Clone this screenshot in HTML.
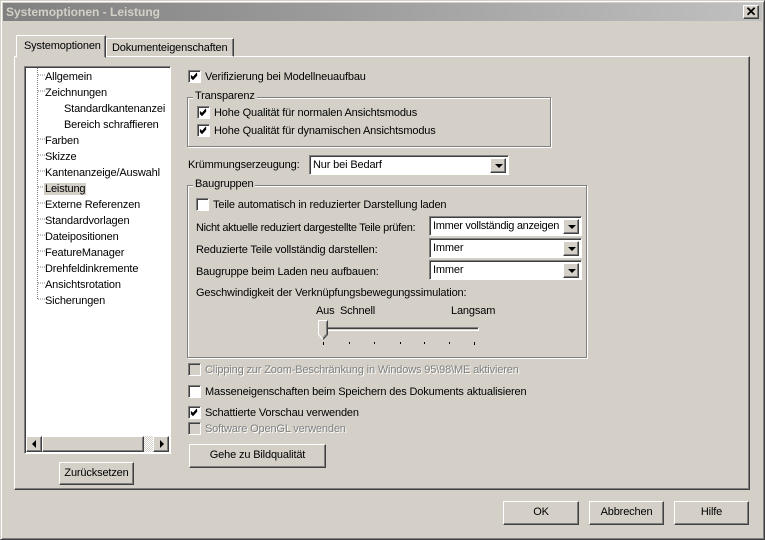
<!DOCTYPE html>
<html><head><meta charset="utf-8"><style>
*{box-sizing:border-box;margin:0;padding:0}
body{width:765px;height:540px;background:#d4d0c8;font-family:"Liberation Sans",sans-serif;font-size:11px;letter-spacing:-0.15px;color:#000;position:relative;overflow:hidden}
.a{position:absolute;white-space:nowrap}
.win{left:0;top:0;width:765px;height:540px;border:1px solid;border-color:#d4d0c8 #404040 #404040 #d4d0c8;box-shadow:inset 1px 1px #fff,inset -1px -1px #808080}
.title{left:3px;top:3px;width:759px;height:18px;background:linear-gradient(90deg,#808080,#c0c0c0);color:#d4d0c8;font-weight:bold;font-size:12px;letter-spacing:0;line-height:18px;padding-left:3px}
.rz{border:1px solid;border-color:#fff #404040 #404040 #fff;box-shadow:inset -1px -1px #808080;background:#d4d0c8}
.sk{border:1px solid;border-color:#808080 #fff #fff #808080;box-shadow:inset 1px 1px #404040;background:#fff}
.grp{border:1px solid #808080;box-shadow:1px 1px #fff,inset 1px 1px #fff}
.gl{background:#d4d0c8;padding:0 2px}
.cb{width:13px;height:13px}
.cb svg{position:absolute;left:1px;top:1px}
.dis{color:#808080;text-shadow:1px 1px #fff}
.cbd{background:#d4d0c8}
.btn{text-align:center;line-height:21px}
.dd{position:absolute;right:2px;top:2px;width:16px;height:15px}
.dd:after{content:"";position:absolute;left:4px;top:5px;border-left:4px solid transparent;border-right:4px solid transparent;border-top:4px solid #000}
.tree{font-size:11px}
.t{top:1px}
</style></head><body>
<div class="a win"></div>
<div class="a title">Systemoptionen - Leistung</div>
<div class="a rz" style="left:743px;top:5px;width:16px;height:14px;text-align:center;line-height:11px;font-size:13px;font-weight:bold">✕</div>

<div class="a rz" style="left:14px;top:56px;width:736px;height:434px;box-shadow:inset -1px -1px #808080"></div>
<div class="a" style="left:106px;top:38px;width:128px;height:19px;border:1px solid;border-color:#fff #404040 transparent #fff;box-shadow:inset -1px 0 #808080;padding:3px 0 0 5px">Dokumenteigenschaften</div>
<div class="a" style="left:16px;top:35px;width:90px;height:23px;border:1px solid;border-color:#fff #404040 transparent #fff;box-shadow:inset -1px 0 #808080;background:#d4d0c8;padding:4px 0 0 7px">Systemoptionen</div>

<div class="a sk" style="left:24px;top:66px;width:147px;height:388px"></div>
<svg class="a" style="left:26px;top:68px" width="30" height="240">
<g stroke="#808080" stroke-dasharray="1 1" fill="none">
<path d="M11.5 0V232M12 7h7M12 23h7M12 71h7M12 87h7M12 103h7M12 119h7M12 135h7M12 151h7M12 167h7M12 183h7M12 199h7M12 215h7M12 231h7M30.5 28V56M31 39h7M31 55h7"/>
</g></svg>
<div class="a tree" style="left:45px;top:69px;line-height:16px">Allgemein<br>Zeichnungen<br><span style="margin-left:19px">Standardkantenanzei</span><br><span style="margin-left:19px">Bereich schraffieren</span><br>Farben<br>Skizze<br>Kantenanzeige/Auswahl<br><span style="background:#d4d0c8;padding:0 1px;margin-left:-1px">Leistung</span><br>Externe Referenzen<br>Standardvorlagen<br>Dateipositionen<br>FeatureManager<br>Drehfeldinkremente<br>Ansichtsrotation<br>Sicherungen</div>
<div class="a" style="left:26px;top:436px;width:143px;height:16px;background:repeating-conic-gradient(#d4d0c8 0 25%,#fff 0 50%) 0 0/2px 2px"></div>
<div class="a rz" style="left:26px;top:436px;width:16px;height:16px"><div class="a" style="left:5px;top:3px;border-top:4px solid transparent;border-bottom:4px solid transparent;border-right:4px solid #000"></div></div>
<div class="a rz" style="left:42px;top:436px;width:102px;height:16px"></div>
<div class="a rz" style="left:153px;top:436px;width:16px;height:16px"><div class="a" style="left:6px;top:3px;border-top:4px solid transparent;border-bottom:4px solid transparent;border-left:4px solid #000"></div></div>
<div class="a rz btn" style="left:59px;top:462px;width:75px;height:23px">Zurücksetzen</div>

<div class="a sk cb" style="left:188px;top:70px"><svg width="9" height="9"><path d="M1 3.5l2 2 4-4.5M1 4.5l2 2 4-4.5M1 5.5l2 2 4-4.5" stroke="#000" fill="none"/></svg></div>
<div class="a" style="left:205px;top:71px">Verifizierung bei Modellneuaufbau</div>

<div class="a grp" style="left:187px;top:97px;width:364px;height:50px"></div>
<div class="a gl" style="left:193px;top:90px">Transparenz</div>
<div class="a sk cb" style="left:197px;top:106px"><svg width="9" height="9"><path d="M1 3.5l2 2 4-4.5M1 4.5l2 2 4-4.5M1 5.5l2 2 4-4.5" stroke="#000" fill="none"/></svg></div>
<div class="a" style="left:214px;top:107px">Hohe Qualität für normalen Ansichtsmodus</div>
<div class="a sk cb" style="left:197px;top:124px"><svg width="9" height="9"><path d="M1 3.5l2 2 4-4.5M1 4.5l2 2 4-4.5M1 5.5l2 2 4-4.5" stroke="#000" fill="none"/></svg></div>
<div class="a" style="left:214px;top:125px">Hohe Qualität für dynamischen Ansichtsmodus</div>

<div class="a" style="left:188px;top:159px">Krümmungserzeugung:</div>
<div class="a sk" style="left:309px;top:155px;width:200px;height:20px;padding:3px 3px">Nur bei Bedarf<div class="dd rz"></div></div>

<div class="a grp" style="left:187px;top:185px;width:400px;height:173px"></div>
<div class="a gl" style="left:193px;top:178px">Baugruppen</div>
<div class="a sk cb" style="left:196px;top:198px"></div>
<div class="a" style="left:213px;top:199px">Teile automatisch in reduzierter Darstellung laden</div>
<div class="a" style="left:196px;top:222px;letter-spacing:-0.3px">Nicht aktuelle reduziert dargestellte Teile prüfen:</div>
<div class="a sk" style="left:429px;top:216px;width:153px;height:20px;padding:3px 3px;overflow:hidden;letter-spacing:-0.3px">Immer vollständig anzeigen<div class="dd rz"></div></div>
<div class="a" style="left:196px;top:244px">Reduzierte Teile vollständig darstellen:</div>
<div class="a sk" style="left:429px;top:238px;width:153px;height:20px;padding:3px 3px">Immer<div class="dd rz"></div></div>
<div class="a" style="left:196px;top:266px">Baugruppe beim Laden neu aufbauen:</div>
<div class="a sk" style="left:429px;top:260px;width:153px;height:20px;padding:3px 3px">Immer<div class="dd rz"></div></div>
<div class="a" style="left:196px;top:287px">Geschwindigkeit der Verknüpfungsbewegungssimulation:</div>
<div class="a" style="left:316px;top:305px">Aus</div>
<div class="a" style="left:340px;top:305px">Schnell</div>
<div class="a" style="left:451px;top:305px">Langsam</div>
<div class="a" style="left:322px;top:327px;width:157px;height:4px;border:1px solid;border-color:#808080 #fff #fff #808080;box-shadow:inset 1px 1px #404040"></div>
<svg class="a" style="left:317px;top:320px" width="170" height="28">
<path d="M1.5 0.5h9v14l-4.5 5l-4.5-5z" fill="#d4d0c8" stroke="#fff"/>
<path d="M10.5 0.5v14l-4.5 5" fill="none" stroke="#404040"/>
<path d="M9.5 1.5v12.5l-3.5 4" fill="none" stroke="#808080"/>
<g stroke="#000"><path d="M6.5 22v3M32.5 22v2M57.5 22v2M83.5 22v2M107.5 22v2M132.5 22v2M157.5 22v3"/></g>
</svg>

<div class="a sk cb cbd" style="left:188px;top:363px"></div>
<div class="a dis" style="left:205px;top:364px">Clipping zur Zoom-Beschränkung in Windows 95\98\ME aktivieren</div>
<div class="a sk cb" style="left:188px;top:385px"></div>
<div class="a" style="left:205px;top:386px">Masseneigenschaften beim Speichern des Dokuments aktualisieren</div>
<div class="a sk cb" style="left:188px;top:406px"><svg width="9" height="9"><path d="M1 3.5l2 2 4-4.5M1 4.5l2 2 4-4.5M1 5.5l2 2 4-4.5" stroke="#000" fill="none"/></svg></div>
<div class="a" style="left:205px;top:407px">Schattierte Vorschau verwenden</div>
<div class="a sk cb cbd" style="left:188px;top:422px"></div>
<div class="a dis" style="left:205px;top:423px">Software OpenGL verwenden</div>
<div class="a rz btn" style="left:189px;top:444px;width:137px;height:24px">Gehe zu Bildqualität</div>

<div class="a rz btn" style="left:503px;top:501px;width:76px;height:24px">OK</div>
<div class="a rz btn" style="left:589px;top:501px;width:75px;height:24px">Abbrechen</div>
<div class="a rz btn" style="left:674px;top:501px;width:75px;height:24px">Hilfe</div>
</body></html>
